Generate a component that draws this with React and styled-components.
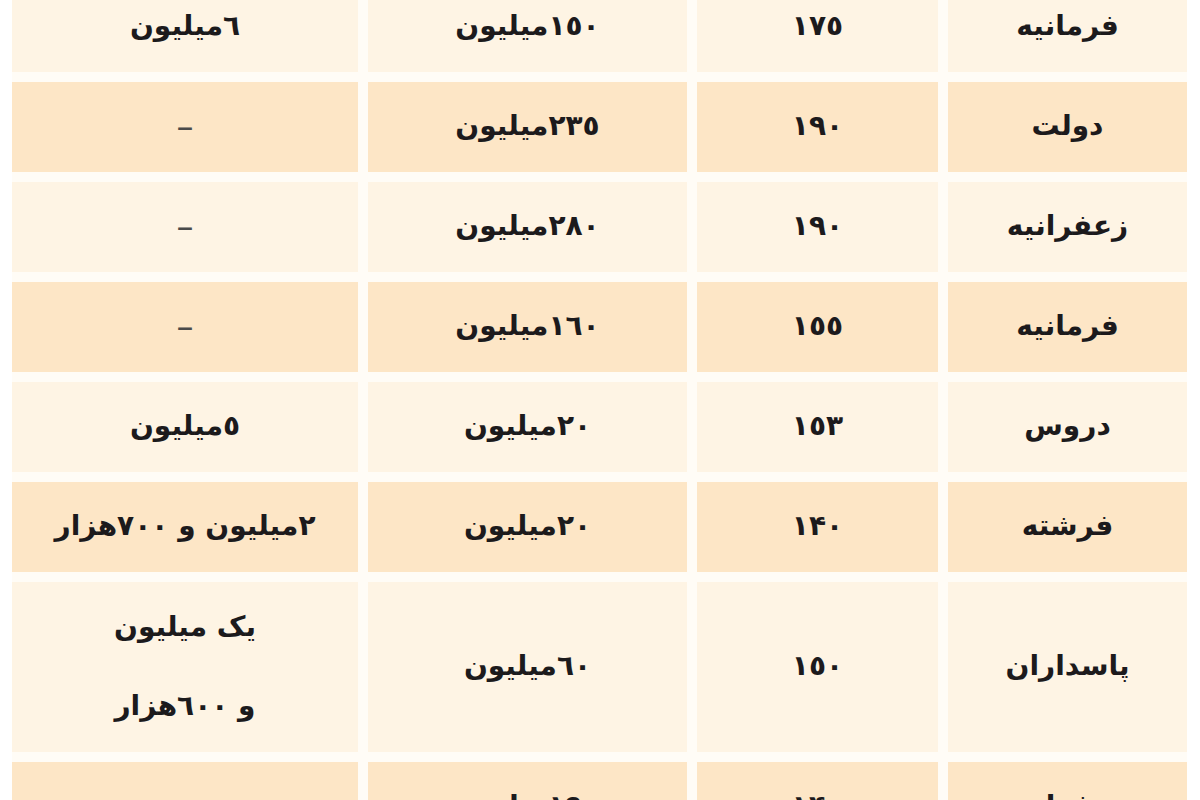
import React from "react";
import styled, { createGlobalStyle } from "styled-components";

const Global = createGlobalStyle`
  html, body { margin: 0; padding: 0; background: #ffffff; }
  body { overflow: hidden; }
`;

const Page = styled.div`
  width: 1200px;
  height: 800px;
  overflow: hidden;
  background: #ffffff;
  padding: 0 13px 0 12px;
  box-sizing: border-box;
`;

const Table = styled.div`
  direction: rtl;
  margin-top: -18px;
  display: grid;
  grid-template-columns: 239px 241px 319px 346px;
  gap: 10px;
  background: #fffcf6;
  font-family: "DejaVu Sans", "Noto Sans", sans-serif;
  font-weight: bold;
  font-size: 28px;
  color: #1c1a1c;
`;

const Cell = styled.div`
  background: ${(p) => (p.$dark ? "#fde6c6" : "#fef4e4")};
  display: flex;
  align-items: center;
  justify-content: center;
  text-align: center;
  padding: 5px 10px 7px;
  min-height: 78px;
  line-height: 78px;
`;

const Dash = styled.span`
  font-weight: normal;
  font-size: 34px;
  color: #4a4a4a;
`;

const Lines = styled.span`
  display: block;
  line-height: 79px;
`;

const rows = [
  ["فرمانیه", "۱۷٥", "۱٥۰میلیون", "٦میلیون"],
  ["دولت", "۱۹۰", "۲۳٥میلیون", null],
  ["زعفرانیه", "۱۹۰", "۲۸۰میلیون", null],
  ["فرمانیه", "۱٥٥", "۱٦۰میلیون", null],
  ["دروس", "۱٥۳", "۲۰میلیون", "٥میلیون"],
  ["فرشته", "۱۴۰", "۲۰میلیون", "۲میلیون و ۷۰۰هزار"],
  ["پاسداران", "۱٥۰", "٦۰میلیون", ["یک میلیون", "و ٦۰۰هزار"]],
  ["زعفرانیه", "۱۴۰", "۱۹۰میلیون", null],
];

function Content({ value }) {
  if (value === null) return <Dash>–</Dash>;
  if (Array.isArray(value))
    return (
      <Lines>
        {value.map((l, i) => (
          <div key={i}>{l}</div>
        ))}
      </Lines>
    );
  return value;
}

export default function App() {
  return (
    <>
      <Global />
      <Page>
        <Table>
          {rows.map((r, i) =>
            r.map((v, j) => (
              <Cell key={`${i}-${j}`} $dark={i % 2 === 1}>
                <Content value={v} />
              </Cell>
            ))
          )}
        </Table>
      </Page>
    </>
  );
}
